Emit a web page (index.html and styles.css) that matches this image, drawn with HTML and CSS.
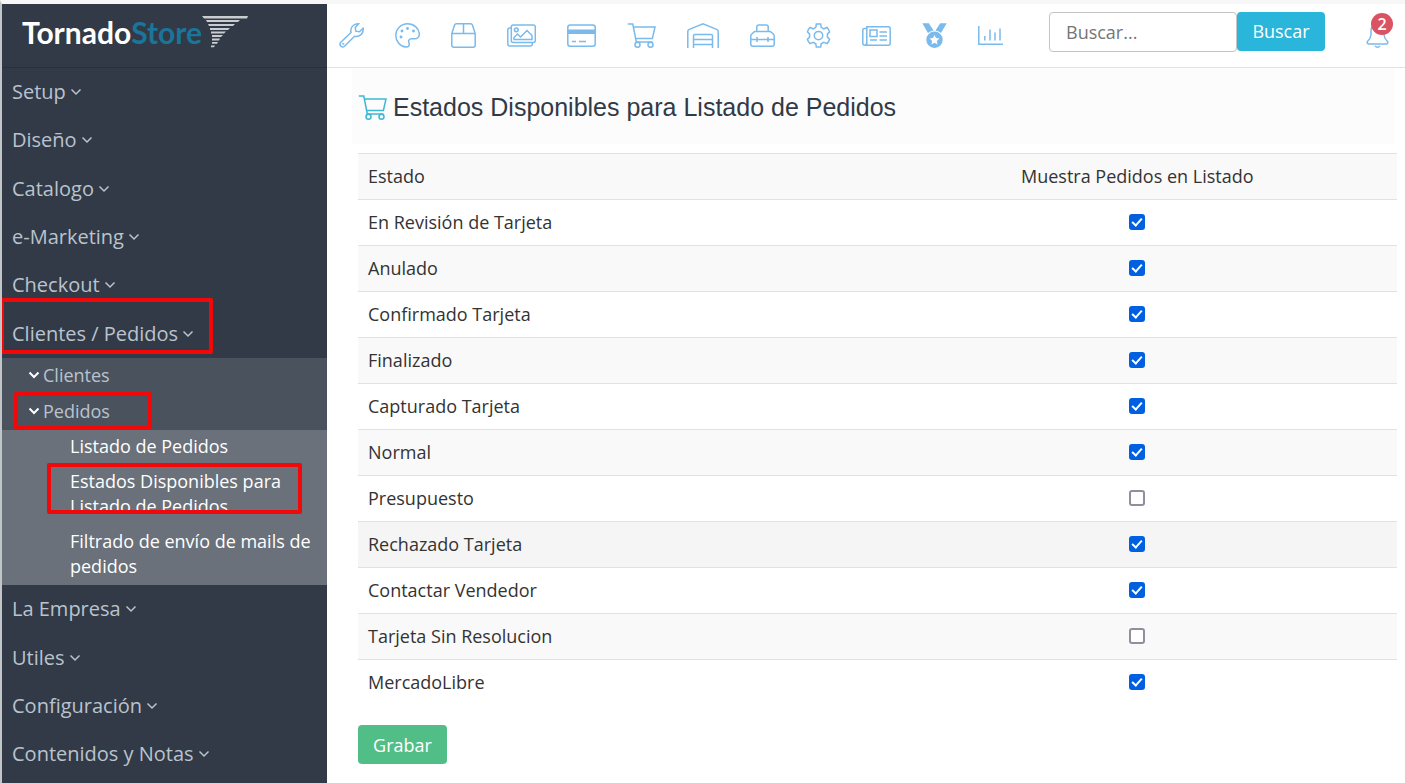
FILE: index.html
```
<!DOCTYPE html>
<html lang="es">
<head>
  <meta charset="UTF-8">
  <title>TornadoStore - Estados Disponibles para Listado de Pedidos</title>
  <link rel="stylesheet" href="styles.css">
</head>

<body>

  <!-- Simbolos compartidos -->
  <svg class="simbolos" aria-hidden="true">
    <symbol id="flecha" viewBox="0 0 12 8">
      <path d="M1.5 1.5 6 6l4.500-4.500"/>
    </symbol>
    <symbol id="carrito" viewBox="0 0 29 25">
      <path d="M.8 1h5l3.500 18h16.200M6.300 4h21.700l-2.600 11.500H8.600"/>
      <circle cx="10.500" cy="21.700" r="2.500"/>
      <circle cx="23.500" cy="21.700" r="2.500"/>
    </symbol>
  </svg>

  <aside class="sidebar">
    <a href="#inicio" class="logo">
      <span class="logo-tornado">Tornado</span><span class="logo-store">Store</span>
      <svg class="logo-icono" viewBox="0 0 46 32" aria-hidden="true">
        <path d="M0 0h46l-1 2.500H2zM4 4h34l-2 2H5zM6 8h27l-2 2H7zM8 12h20l-2 2H8zM9 15.500h15l-2 2H9zM10 19h11l-2 2h-9zM10 22.500h8l-1 2h-7zM10 26h6l-1 1.800h-5zM9 29.500h4l-1 1.800H9z"/>
      </svg>
    </a>

    <nav class="menu">
      <ul class="menu-lista">
        <li><a href="#setup">Setup <svg class="flecha"><use href="#flecha"/></svg></a></li>
        <li><a href="#diseno">Diseño <svg class="flecha"><use href="#flecha"/></svg></a></li>
        <li><a href="#catalogo">Catalogo <svg class="flecha"><use href="#flecha"/></svg></a></li>
        <li><a href="#emarketing">e-Marketing <svg class="flecha"><use href="#flecha"/></svg></a></li>
        <li><a href="#checkout">Checkout <svg class="flecha"><use href="#flecha"/></svg></a></li>
        <li>
          <a href="#clientes-pedidos" class="marca marca-seccion">Clientes / Pedidos <svg class="flecha"><use href="#flecha"/></svg></a>
          <ul class="submenu">
            <li><a href="#clientes"><svg class="flecha"><use href="#flecha"/></svg>Clientes</a></li>
            <li>
              <a href="#pedidos" class="marca marca-grupo"><svg class="flecha"><use href="#flecha"/></svg>Pedidos</a>
              <ul class="opciones">
                <li><a href="#listado">Listado de Pedidos</a></li>
                <li><a href="#estados" class="marca marca-opcion">Estados Disponibles para Listado de Pedidos</a></li>
                <li><a href="#filtrado">Filtrado de envío de mails de pedidos</a></li>
              </ul>
            </li>
          </ul>
        </li>
        <li><a href="#empresa">La Empresa <svg class="flecha"><use href="#flecha"/></svg></a></li>
        <li><a href="#utiles">Utiles <svg class="flecha"><use href="#flecha"/></svg></a></li>
        <li><a href="#configuracion">Configuración <svg class="flecha"><use href="#flecha"/></svg></a></li>
        <li><a href="#contenidos">Contenidos y Notas <svg class="flecha"><use href="#flecha"/></svg></a></li>
      </ul>
    </nav>
  </aside>

  <div class="pagina">
    <header class="barra">
      <nav class="accesos">
        <a href="#setup" aria-label="Setup">
          <svg viewBox="0 0 25 25"><path d="M1.800 19.200 12 9.500c-1-4.500 2-9 7.500-8.700l-3.300 3.700.6 3.700 3.700.6 3.600-3.500c.8 5-3.600 9.300-8.600 8L5.500 23.200c-2.700 2.300-6-1.200-3.700-4z"/><circle cx="4.300" cy="20.800" r=".4"/></svg>
        </a>
        <a href="#diseno" aria-label="Diseño">
          <svg viewBox="0 0 25 25"><path d="M10.800 24C5 23.300.8 18.300.8 12.500.8 6 6 .8 12.500.8S24.300 5.500 24.300 11c0 3-2 4.800-4.300 4.800h-3.500c-2.500 0-3.500 2-2.500 4.200 1 2.500-.5 4.300-3.200 4z"/><circle cx="6" cy="14" r=".7"/><circle cx="7" cy="8" r=".7"/><circle cx="12.500" cy="5.500" r=".7"/><circle cx="18.500" cy="8" r=".7"/></svg>
        </a>
        <a href="#catalogo" aria-label="Catalogo">
          <svg viewBox="0 0 25 25"><path d="M.8 10.500 3.500 2.200Q4 .8 5.300.8h14.400q1.300 0 1.800 1.400l2.700 8.300v11.700q0 2-2 2H2.800q-2 0-2-2zM.8 10.500h23.400M12.500.8v9.700"/></svg>
        </a>
        <a href="#imagenes" aria-label="Imágenes" class="ancho">
          <svg viewBox="0 0 29 25"><rect x="4.300" y="2" width="24" height="17.500" rx="2"/><path d="M4.300 5H2.800q-2 0-2 2v14q0 2 2 2h20.500q2 0 2-2v-1.500M7 16.500v-2l3.500-3.500 3 3 6.500-6.500 5 5v4z"/><circle cx="9.300" cy="6.800" r="1.900"/></svg>
        </a>
        <a href="#checkout" aria-label="Checkout" class="ancho">
          <svg viewBox="0 0 29 25"><rect x=".8" y="2" width="27.400" height="21.200" rx="2.500"/><path class="relleno" d="M1 6.500h27v4.500H1z"/><path d="M5 18.500h4M12 18.500h7"/></svg>
        </a>
        <a href="#pedidos" aria-label="Pedidos" class="ancho">
          <svg viewBox="0 0 29 25"><use href="#carrito"/></svg>
        </a>
        <a href="#empresa" aria-label="La Empresa" class="extra">
          <svg viewBox="0 0 32 25"><path d="M.8 25V8.500Q.8 7 2.300 6.400L16 .9l13.700 5.500q1.500.6 1.500 2.100V25M6.500 25V13q0-1.500 1.500-1.500h16q1.500 0 1.500 1.500v12M6.500 16.500h19M6.500 21.500h19"/></svg>
        </a>
        <a href="#utiles" aria-label="Utiles">
          <svg viewBox="0 0 25 25"><path d="M6.800 8.500V4q0-2 2-2h7.400q2 0 2 2v4.500M.8 13q0-1 .8-1.800l2-2q.7-.7 1.700-.7h14.400q1 0 1.700.7l2 2q.8.8.8 1.800v8.200q0 2-2 2H2.800q-2 0-2-2zM.8 16.500h23.400M7 14v5M18 14v5"/></svg>
        </a>
        <a href="#configuracion" aria-label="Configuración">
          <svg viewBox="0 0 25 25"><path d="M9.800 4.300 10.300.9h4.400l.5 3.400 2.600 1.500 3.300-1.300q1.900 2 2.500 4.400l-2.200 2.200v3l2.200 2.200q-.8 2.600-2.500 4.300l-3.300-1.300-2.600 1.500-.5 3.300h-4.400l-.5-3.300-2.600-1.500-3.300 1.300Q2.200 18.700 1.400 16.300l2.200-2.200v-3L1.400 8.900q.7-2.500 2.500-4.400l3.300 1.300z"/><circle cx="12.500" cy="12.600" r="4.200"/></svg>
        </a>
        <a href="#contenidos" aria-label="Contenidos y Notas" class="ancho">
          <svg viewBox="0 0 29 25"><path d="M4.800 21.500V3.800h21.400q2 0 2 2v14.400q0 2-2 2H2.800q-2 0-2-2V7q0-1.500 1.500-1.500h2.500M4.800 18.500q0 3.500-2 3.700M17.500 9h7.500M17.500 13h7.500M8 17h7M17.500 17h7.500"/><rect x="8" y="7" width="7" height="6.500"/></svg>
        </a>
        <a href="#premios" aria-label="Premios">
          <svg viewBox="0 0 25 25"><path class="relleno" d="M.3.200h6.500L11.500 7.500Q8 8 6 10zM24.700.200h-6.500L13.500 7.500Q17 8 19 10zM12.500 8.500a8.200 8.200 0 1 0 0 16.400 8.200 8.200 0 0 0 0-16.400zm0 3.500 1.500 3.100 3.400.5-2.500 2.400.6 3.400-3-1.600-3 1.600.6-3.400-2.500-2.400 3.400-.5z"/></svg>
        </a>
        <a href="#estadisticas" aria-label="Estadísticas">
          <svg viewBox="0 0 25 25"><path d="M.8 3v18.200H25M6.800 13v4.500M12 6.500v11M17 9.500v8M22 5.500v12"/></svg>
        </a>
      </nav>

      <form class="buscador">
        <input type="text" placeholder="Buscar..." aria-label="Buscar">
        <button type="button">Buscar</button>
      </form>

      <a href="#avisos" class="avisos" aria-label="Avisos">
        <svg viewBox="0 0 22 24"><path d="M4.500 6.500v4c0 3-1.500 5-3.300 6.800-1.200 1.400-.2 2.700 1.300 2.700h17c1.500 0 2.500-1.300 1.300-2.700-1.800-1.800-3.300-3.800-3.300-6.800v-4c0-8-13-8-13 0M8.500 22q2.500 2.500 5 0"/></svg>
        <span class="globo">2</span>
      </a>
    </header>

    <main class="contenido">
      <div class="titulo">
        <svg viewBox="0 0 29 25" aria-hidden="true"><use href="#carrito"/></svg>
        <h1>Estados Disponibles para Listado de Pedidos</h1>
      </div>

      <form class="formulario">
        <table>
          <thead>
            <tr><th>Estado</th><th>Muestra Pedidos en Listado</th></tr>
          </thead>
          <tbody>
            <tr><td><label for="revision">En Revisión de Tarjeta</label></td><td><input type="checkbox" id="revision" checked></td></tr>
            <tr><td><label for="anulado">Anulado</label></td><td><input type="checkbox" id="anulado" checked></td></tr>
            <tr><td><label for="confirmado">Confirmado Tarjeta</label></td><td><input type="checkbox" id="confirmado" checked></td></tr>
            <tr><td><label for="finalizado">Finalizado</label></td><td><input type="checkbox" id="finalizado" checked></td></tr>
            <tr><td><label for="capturado">Capturado Tarjeta</label></td><td><input type="checkbox" id="capturado" checked></td></tr>
            <tr><td><label for="normal">Normal</label></td><td><input type="checkbox" id="normal" checked></td></tr>
            <tr><td><label for="presupuesto">Presupuesto</label></td><td><input type="checkbox" id="presupuesto"></td></tr>
            <tr class="activa"><td><label for="rechazado">Rechazado Tarjeta</label></td><td><input type="checkbox" id="rechazado" checked></td></tr>
            <tr><td><label for="contactar">Contactar Vendedor</label></td><td><input type="checkbox" id="contactar" checked></td></tr>
            <tr><td><label for="resolucion">Tarjeta Sin Resolucion</label></td><td><input type="checkbox" id="resolucion"></td></tr>
            <tr><td><label for="mercadolibre">MercadoLibre</label></td><td><input type="checkbox" id="mercadolibre" checked></td></tr>
          </tbody>
        </table>
        <button type="button" class="grabar">Grabar</button>
      </form>
    </main>
  </div>

</body>
</html>
```
FILE: styles.css
```
/* Reset */
*,
*::after {
  margin: 0;
  padding: 0;
  box-sizing: border-box;
}

body {
  display: flex;
  min-height: 100vh;
  border-top: 4px solid #f7f7f8;
  border-left: 2px solid #c3c6c8;
  background: #fff;
  color: #333;
  font-family: "Open Sans", "Noto Sans", sans-serif;
  font-size: 18px;
}

a {
  color: inherit;
  text-decoration: none;
}

ul {
  list-style: none;
}

svg {
  display: block;
  fill: none;
  stroke: currentColor;
  stroke-width: 1.5;
}

.simbolos {
  position: absolute;
  width: 0;
  height: 0;
}

.relleno {
  fill: currentColor;
  stroke: none;
}

/* Menu lateral */
.sidebar {
  display: flex;
  flex-direction: column;
  flex: none;
  width: 325px;
  background: #313a46;
  color: #bac3ce;
}

.logo {
  display: flex;
  align-items: center;
  height: 64px;
  padding: 0 20px 8px;
  border-bottom: 1px solid #27303b;
  font-family: Lato, "Open Sans", sans-serif;
  font-size: 30px;
  font-weight: bold;
  line-height: 40px;
}

.logo-tornado {
  color: #fff;
}

.logo-store {
  color: #1b7499;
}

.logo-icono {
  width: 46px;
  height: 32px;
  fill: #c9ccd0;
  stroke: none;
}

.menu {
  display: flex;
  flex: 1;
  padding-bottom: 4px;
}

.menu-lista {
  display: flex;
  flex-direction: column;
  flex: 1;
}

.menu-lista > li {
  display: flex;
  flex-direction: column;
  flex: 1 0 auto;
}

.menu-lista > li > a {
  display: flex;
  align-items: center;
  flex: 1 0 auto;
  gap: 4px;
  min-height: 48px;
  padding: 0 10px 1px;
  font-size: 20px;
  line-height: 28px;
}

.flecha {
  width: 12px;
  height: 8px;
}

.submenu {
  background: #4a525e;
}

.submenu > li > a {
  display: flex;
  align-items: center;
  gap: 3px;
  height: 36px;
  padding: 0 0 2px 26px;
}

.submenu .flecha {
  color: #fff;
  stroke-width: 2;
}

.opciones {
  background: #6a717a;
  color: #fff;
}

.opciones a {
  display: block;
  padding: 4px 10px 6px 68px;
  line-height: 25px;
}

/* Recuadros rojos sobre el menu */
.marca {
  position: relative;
}

.marca::after {
  content: "";
  position: absolute;
  border: 4px solid #f20808;
  border-radius: 2px;
}

.marca-seccion::after {
  top: -12px;
  left: -2px;
  width: 213px;
  height: 56px;
}

.marca-grupo::after {
  top: -2px;
  left: 12px;
  width: 138px;
  height: 38px;
}

.marca-opcion::after {
  top: -2px;
  left: 45px;
  width: 255px;
  height: 51px;
}

/* Barra superior */
.pagina {
  flex: 1;
  min-width: 0;
}

.barra {
  display: flex;
  align-items: center;
  height: 64px;
  padding: 0 16px 0 12px;
  border-bottom: 1px solid #e0e2e4;
}

.accesos {
  display: flex;
  gap: 31px;
  color: #7abaec;
}

.accesos a {
  width: 25px;
}

.accesos .ancho {
  width: 29px;
}

.accesos .extra {
  width: 32px;
}

.accesos svg {
  width: 100%;
  height: 25px;
}

.buscador {
  display: flex;
  align-items: flex-start;
  margin: 0 41px 8px auto;
}

.buscador input {
  width: 188px;
  height: 40px;
  padding: 0 16px;
  border: 1px solid #c4c4c6;
  border-radius: 4px;
  font: inherit;
}

.buscador input::placeholder {
  color: #757575;
}

button {
  border: none;
  border-radius: 4px;
  color: #fff;
  font: inherit;
  cursor: pointer;
}

.buscador button {
  width: 88px;
  height: 39px;
  background: #2ab5da;
}

.avisos {
  position: relative;
  color: #7abaec;
}

.avisos svg {
  width: 23px;
  height: 24px;
}

.globo {
  position: absolute;
  top: -11px;
  left: 5px;
  width: 22px;
  height: 22px;
  border-radius: 50%;
  background: #d95362;
  color: #fff;
  font-size: 16px;
  font-weight: 600;
  line-height: 22px;
  text-align: center;
}

/* Contenido */
.contenido {
  padding: 0 8px 0 25px;
}

.titulo {
  display: flex;
  align-items: center;
  gap: 6px;
  height: 76px;
  padding: 2px 0 0 6px;
  margin-right: 2px;
  background: #fcfcfc;
}

.titulo svg {
  width: 29px;
  height: 25px;
  color: #3db8d3;
}

h1 {
  color: #313a46;
  font-family: "Liberation Sans", Arial, sans-serif;
  font-size: 25px;
  font-weight: normal;
}

.formulario {
  padding: 9px 0 19px 6px;
}

table {
  width: 100%;
  table-layout: fixed;
  border-collapse: separate;
  border-spacing: 0;
}

th,
td {
  height: 46px;
  padding: 0 10px 2px;
  border-top: 1px solid #dfe1e3;
  font-weight: normal;
  text-align: left;
}

th:last-child,
td:last-child {
  text-align: center;
}

thead tr,
tbody tr:nth-child(even) {
  background: #f9f9f9;
}

tbody .activa:nth-child(even) {
  background: #f5f5f5;
}

input[type="checkbox"] {
  display: block;
  appearance: none;
  position: relative;
  width: 16px;
  height: 16px;
  margin: 1px auto 0;
  border: 2px solid #8f8f9d;
  border-radius: 3px;
  background: #fff;
}

input[type="checkbox"]:checked {
  border-color: #0060df;
  background: #0060df;
}

input[type="checkbox"]:checked::after {
  content: "";
  position: absolute;
  top: 0;
  left: 3px;
  width: 6px;
  height: 10px;
  border: solid #fff;
  border-width: 0 2px 2px 0;
  transform: rotate(42deg);
}

.grabar {
  width: 89px;
  height: 39px;
  margin-top: 20px;
  background: #52be87;
}
```
